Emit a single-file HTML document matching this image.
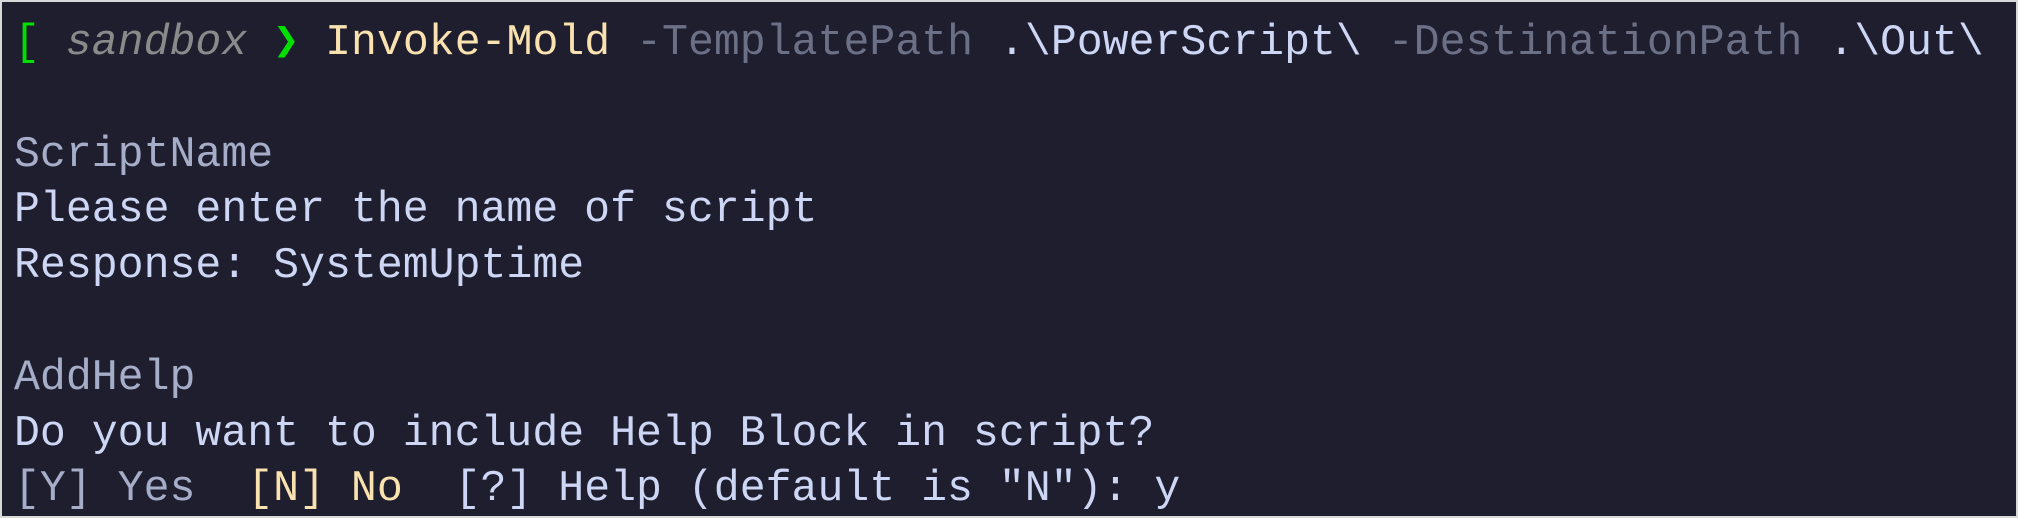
<!DOCTYPE html>
<html><head><meta charset="utf-8"><style>
html,body{margin:0;padding:0;}
body{width:2018px;height:518px;background:#1e1e2e;overflow:hidden;box-sizing:border-box;border:2px solid #d8d8d8;}
pre{margin:0;padding:13px 0 0 12px;font-family:"Liberation Mono","DejaVu Sans Mono",monospace;font-size:43.2px;line-height:55.8px;color:#cdd6f4;white-space:pre;}
.g{color:#00e000}.s{color:#8a8a8a;font-style:italic}.y{color:#f9e2af}.p{color:#6c7086}.h{color:#a6adc8}
</style></head><body><pre><span class="g">[</span> <span class="s">sandbox</span> <span class="g">❯</span> <span class="y">Invoke-Mold</span> <span class="p">-TemplatePath</span> .\PowerScript\ <span class="p">-DestinationPath</span> .\Out\

<span class="h">ScriptName</span>
Please enter the name of script
Response: SystemUptime

<span class="h">AddHelp</span>
Do you want to include Help Block in script?
<span class="h">[Y] Yes</span>  <span class="y">[N] No</span>  [?] Help (default is "N"): y</pre></body></html>
